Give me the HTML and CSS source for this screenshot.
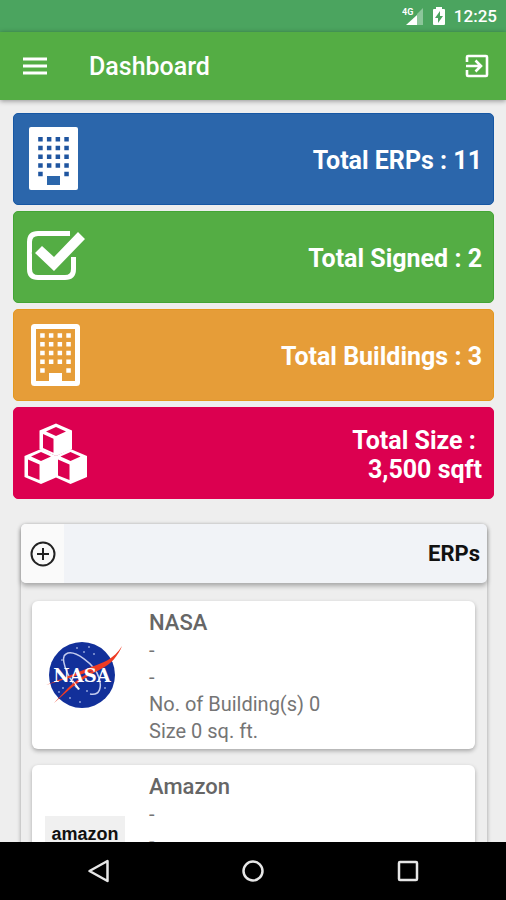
FILE: index.html
```
<!DOCTYPE html>
<html lang="en">
  <head>
    <meta charset="UTF-8" />
    <meta name="viewport" content="width=device-width, initial-scale=1.0" />
    <title>Dashboard</title>
    <link rel="stylesheet" href="styles.css">
  </head>
  <body class="body">
    <div class="statusBar">
      <svg width="22" height="20" viewBox="0 0 22 20">
        <path d="M15 9v10H4z" fill="#fff" />
        <path d="M21 2v17h-6V8z" fill="#8cc69a" />
        <text x="0" y="9" class="net">4G</text>
      </svg>
      <svg width="12" height="20" viewBox="0 0 12 20">
        <path d="M3 1h6v2h2q1 0 1 1v14q0 1-1 1H1q-1 0-1-1V4q0-1 1-1h2z" fill="#fff" />
        <path d="M7 5v5h3l-5 7v-5H2z" fill="#4ba45f" />
      </svg>
      <span class="clock">12:25</span>
    </div>

    <header class="appBar">
      <button class="iconBtn" aria-label="Menu">
        <svg width="24" height="18" viewBox="0 0 24 18">
          <path d="M0 2h24M0 9h24M0 16h24" stroke="#fff" stroke-width="3" />
        </svg>
      </button>
      <h1 class="title">Dashboard</h1>
      <button class="iconBtn" aria-label="Log out">
        <svg width="24" height="24" viewBox="0 0 24 24" fill="none" stroke="#fff" stroke-width="2.6">
          <path d="M2 8V3q0-1 1-1h18q1 0 1 1v18q0 1-1 1H3q-1 0-1-1v-5" />
          <path d="M1 12h15M10.500 6.500L16 12l-5.500 5.500" />
        </svg>
      </button>
    </header>

    <main class="content">
      <section class="totals">
        <div class="total blue">
          <svg width="66" height="64" viewBox="0 0 66 64">
            <rect x="6" y="0" width="49" height="63" rx="2" fill="#fff" />
            <path d="M15.200 12.300h31M15.200 21h31M15.200 29.700h31M15.200 38.400h31M15.200 47.100h4.500M41.300 47.100h4.500" class="dots" stroke="#1f55a0" />
            <rect x="24" y="49" width="13" height="9" fill="#2b66ab" />
          </svg>
          <p>Total ERPs : 11</p>
        </div>
        <div class="total green">
          <svg width="66" height="64" viewBox="0 0 66 64">
            <path d="M47 8.500H15q-8.500 0-8.500 8.500v27q0 8.500 8.500 8.500h27q8.500 0 8.500-8.500V32" fill="none" stroke="#fff" stroke-width="5" />
            <path d="M12 28l7-7 12 11L55 7l7 7-31 32z" fill="#fff" stroke="#54ad44" stroke-width="5" paint-order="stroke" />
          </svg>
          <p>Total Signed : 2</p>
        </div>
        <div class="total orange">
          <svg width="66" height="64" viewBox="0 0 66 64">
            <rect x="10.500" y="3.500" width="44" height="57" rx="1" fill="none" stroke="#fff" stroke-width="5" />
            <path d="M17.200 12.500h31M17.200 21.300h31M17.200 30h31M17.200 38.800h31M17.200 47.500h4.500M43.300 47.500h4.500" class="dots" stroke="#fff" />
            <rect x="26" y="50" width="13" height="9" fill="#fff" />
          </svg>
          <p>Total Buildings : 3</p>
        </div>
        <div class="total red">
          <svg width="66" height="64" viewBox="0 0 66 64">
            <g fill="#fff">
              <path d="M33 2.500l16 7V28l-16 7-16.500-7V9.500z" />
              <path d="M18 28l15 7v21.500L18 63 1.500 56V35z" />
              <path d="M47.500 28L64 35v21l-16.500 7L33 56.500V35z" />
            </g>
            <g fill="#dc0050">
              <path d="M33 6l10 4.500L33 15l-10-4.500zM20 13l10.500 4.700v14L20 27z" />
              <path d="M18 31l10 4.500L18 40 8 35.500zM5 38.500L16.500 43.500V59L5 54.500z" />
              <path d="M47.500 31l10 4.500-10 4.500-10-4.500zM35 38.500L46.500 43.500V59L35 54.500z" />
            </g>
          </svg>
          <p>Total Size :&nbsp;<br />3,500 sqft</p>
        </div>
      </section>

      <section class="panel">
        <div class="panelHead">
          <button class="addBtn" aria-label="Add ERP">
            <svg width="26" height="26" viewBox="0 0 26 26" fill="none" stroke="#222" stroke-width="2">
              <circle cx="13" cy="13" r="11.500" />
              <path d="M13 7v12M7 13h12" />
            </svg>
          </button>
          <h2>ERPs</h2>
        </div>
        <div class="list">
          <article class="item">
            <svg class="logo" width="80" height="80" viewBox="0 0 80 80">
              <circle cx="37" cy="40" r="33" fill="#12309a" />
              <g fill="#8fa0d8">
                <circle cx="32" cy="13" r="1" /><circle cx="39" cy="17" r="1" /><circle cx="44" cy="12" r="1" />
                <circle cx="49" cy="19" r="1" /><circle cx="17" cy="25" r="1" /><circle cx="18" cy="53" r="1" />
                <circle cx="14" cy="57" r="1" /><circle cx="25" cy="63" r="1" /><circle cx="42" cy="56" r="1" />
                <circle cx="60" cy="53" r="1" /><circle cx="35" cy="67" r="1" />
              </g>
              <path d="M32 53C21 40 15 22 21 19c8-5 29 10 33 24 3 9 1 18-9 16" fill="none" stroke="#c3cbee" stroke-width="1.500" />
              <path d="M77 11C69 24 58 28 46 32L1 50l46-14C40 40 31 45 23 53L9 68l16-14C36 45 48 38 56 34 66 29 73 21 77 11z" fill="#ee3b24" />
              <text x="37" y="47" class="nasaText">NASA</text>
              <path d="M27 44l6 11 2-1z" fill="#fff" />
            </svg>
            <div class="info">
              <h3>NASA</h3>
              <p>-</p>
              <p>-</p>
              <p>No. of Building(s) 0</p>
              <p>Size 0 sq. ft.</p>
            </div>
          </article>
          <article class="item">
            <div class="logo amazon">amazon</div>
            <div class="info">
              <h3>Amazon</h3>
              <p>-</p>
              <p>-</p>
            </div>
          </article>
        </div>
      </section>
    </main>

    <nav class="navBar">
      <button aria-label="Back">
        <svg width="24" height="24" viewBox="0 0 24 24">
          <path d="M21.500 2v20L3.500 12z" />
        </svg>
      </button>
      <button aria-label="Home">
        <svg width="24" height="24" viewBox="0 0 24 24">
          <circle cx="12" cy="12" r="9.500" />
        </svg>
      </button>
      <button aria-label="Recent apps">
        <svg width="24" height="24" viewBox="0 0 24 24">
          <rect x="3" y="3" width="18" height="18" rx="1" />
        </svg>
      </button>
    </nav>
  </body>
</html>
```
FILE: styles.css
```
* {
  box-sizing: border-box;
}
.body {
  margin: 0;
  height: 100vh;
  display: flex;
  flex-direction: column;
  background-color: #eeeeee;
  font-family: Roboto, "Liberation Sans", sans-serif;
}
h1,
h2,
h3,
p {
  margin: 0;
}
button {
  padding: 0;
  border: none;
  background: none;
  cursor: pointer;
}
svg {
  display: block;
  flex-shrink: 0;
}

.statusBar {
  height: 32px;
  flex-shrink: 0;
  padding: 0 9px;
  display: flex;
  align-items: center;
  justify-content: flex-end;
  gap: 9px;
  background-color: #4ba45f;
  color: white;
}
.net {
  font-size: 9px;
  font-weight: 700;
  fill: white;
}
.clock {
  font-size: 17px;
  font-weight: 500;
}

.appBar {
  position: relative;
  height: 68px;
  flex-shrink: 0;
  padding: 0 17px 0 23px;
  display: flex;
  align-items: center;
  background-color: #54ad44;
  box-shadow: 0 1px 5px rgba(0, 0, 0, 0.4);
}
.title {
  flex: 1;
  padding-left: 42px;
  color: white;
  font-size: 25px;
  font-weight: 500;
}

.content {
  flex: 1;
  min-height: 0;
  overflow-y: auto;
  scrollbar-width: none;
  padding: 13px 12px 13px 13px;
}
.totals {
  display: flex;
  flex-direction: column;
  gap: 6px;
}
.total {
  min-height: 92px;
  padding: 0 11px 0 9px;
  display: flex;
  align-items: center;
  justify-content: space-between;
  border: 1px solid;
  border-radius: 5px;
}
.total p {
  padding-top: 3px;
  color: white;
  font-size: 25px;
  line-height: 29px;
  font-weight: 700;
  text-align: right;
}
.blue {
  background-color: #2b66ab;
  border-color: #1657a4;
}
.green {
  background-color: #54ad44;
  border-color: #43a535;
}
.orange {
  background-color: #e69d38;
  border-color: #e4981f;
}
.red {
  background-color: #dc0050;
  border-color: #dc0050;
}

.panel {
  margin: 25px 7px 0 8px;
  border-radius: 5px;
  box-shadow: 0 1px 4px rgba(0, 0, 0, 0.35);
}
.panelHead {
  height: 59px;
  display: flex;
  align-items: center;
  justify-content: space-between;
  padding-right: 7px;
  border-radius: 5px;
  background-color: #f1f3f7;
  box-shadow: 0 3px 5px rgba(0, 0, 0, 0.3);
}
.panelHead h2 {
  color: #111111;
  font-size: 22px;
  font-weight: 700;
}
.addBtn {
  width: 43px;
  height: 100%;
  display: flex;
  align-items: center;
  justify-content: center;
  border-radius: 5px 0 0 5px;
  background-color: #fafafa;
}

.list {
  display: flex;
  flex-direction: column;
  gap: 16px;
  padding: 18px 12px 18px 11px;
}
.item {
  min-height: 148px;
  padding: 0 13px;
  display: flex;
  align-items: center;
  gap: 24px;
  border-radius: 6px;
  background-color: white;
  box-shadow: 0 2px 4px rgba(0, 0, 0, 0.3);
}
.logo {
  width: 80px;
  flex-shrink: 0;
}
.nasaText {
  font-family: "DejaVu Serif", serif;
  font-size: 18px;
  font-weight: 700;
  fill: white;
  text-anchor: middle;
}
.amazon {
  height: 46px;
  padding-top: 6px;
  background-color: #f0f0f0;
  color: #111111;
  font-family: "Liberation Sans", sans-serif;
  font-size: 18px;
  line-height: 24px;
  font-weight: 700;
  text-align: center;
}
.info {
  align-self: flex-start;
  padding: 8px 0 4px;
  color: #757575;
  font-size: 20px;
  line-height: 27px;
}
.info h3 {
  color: #666666;
  font-size: 22px;
  line-height: 28px;
  font-weight: 500;
}

.navBar {
  height: 58px;
  flex-shrink: 0;
  padding: 0 21px;
  display: flex;
  align-items: center;
  justify-content: space-around;
  background-color: black;
}
.navBar svg {
  fill: none;
  stroke: #e6e6e6;
  stroke-width: 2.5;
  stroke-linejoin: round;
}
.dots {
  stroke-width: 4.5;
  stroke-dasharray: 4.5 4.2;
}
```
